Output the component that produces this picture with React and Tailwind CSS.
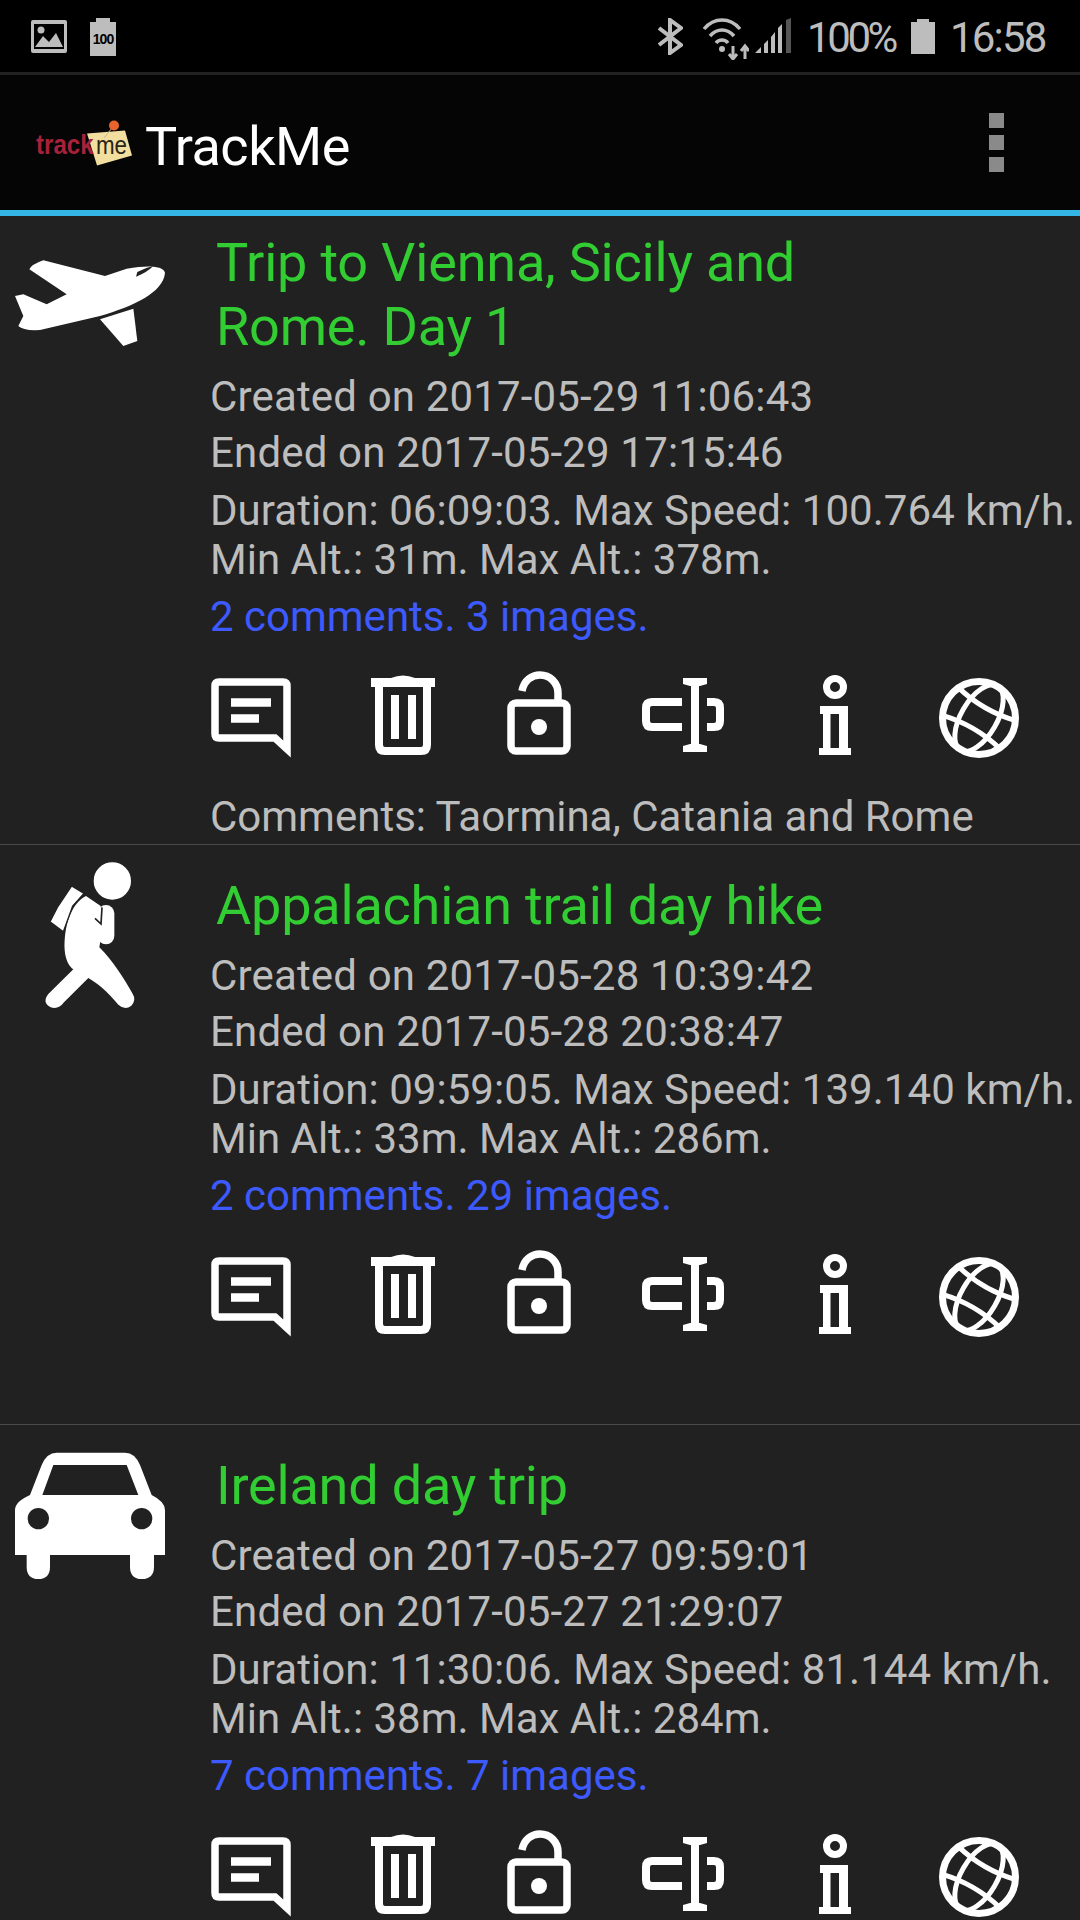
import React from 'react';

const trips = [
  {
    title: ['Trip to Vienna, Sicily and', 'Rome. Day 1'],
    created: '2017-05-29 11:06:43',
    ended: '2017-05-29 17:15:46',
    stats: 'Duration: 06:09:03. Max Speed: 100.764 km/h.',
    alt: 'Min Alt.: 31m. Max Alt.: 378m.',
    counts: '2 comments. 3 images.',
    note: 'Comments: Taormina, Catania and Rome',
    kind: 'plane',
  },
  {
    title: ['Appalachian trail day hike'],
    created: '2017-05-28 10:39:42',
    ended: '2017-05-28 20:38:47',
    stats: 'Duration: 09:59:05. Max Speed: 139.140 km/h.',
    alt: 'Min Alt.: 33m. Max Alt.: 286m.',
    counts: '2 comments. 29 images.',
    note: '',
    kind: 'hiker',
  },
  {
    title: ['Ireland day trip'],
    created: '2017-05-27 09:59:01',
    ended: '2017-05-27 21:29:07',
    stats: 'Duration: 11:30:06. Max Speed: 81.144 km/h.',
    alt: 'Min Alt.: 38m. Max Alt.: 284m.',
    counts: '7 comments. 7 images.',
    note: '',
    kind: 'car',
  },
];

function PlaneIcon() {
  return (
    <svg viewBox="0 0 570 510" className="w-[190px] h-[170px] block" fill="#fff">
      <path d="M495 170C490 150 450 146 380 158L315 180L130 133Q95 145 88 160L200 235L140 265L70 235L45 240L70 300L55 330Q70 345 120 342L300 300C400 270 490 230 495 170Z" />
      <path d="M300 310L400 278L412 375L370 390Z" />
      <path d="M408 182L412 168Q435 155 460 150Q440 170 408 182Z" fill="#212121" />
    </svg>
  );
}

function HikerIcon() {
  return (
    <svg viewBox="0 0 570 510" className="w-[190px] h-[170px] block" fill="#fff">
      <path d="M258 138C213 160 191 230 194 300C196 330 208 350 220 358L145 432Q125 458 152 472Q175 480 192 457L265 384C290 398 320 422 355 464Q375 482 394 467Q410 450 397 430C372 385 337 330 298 292C304 262 307 220 302 168Z" />
      <path d="M215 108L252 130L218 168L190 245L150 215L172 172Z" stroke="#212121" strokeWidth="4" />
      <path d="M318 190V258" stroke="#fff" strokeWidth="50" strokeLinecap="round" />
      <path d="M285 205L303 222L306 172" stroke="#212121" strokeWidth="5" fill="none" />
      <circle cx="337" cy="93" r="58" stroke="#212121" strokeWidth="4" />
    </svg>
  );
}

function CarIcon() {
  return (
    <svg viewBox="0 0 570 510" className="w-[190px] h-[170px] block" fill="#fff">
      <path
        fillRule="evenodd"
        d="M45 375V240Q45 215 90 195L125 105Q140 68 170 68H375Q405 68 420 105L455 195Q495 215 495 240V375H462V410Q462 447 425 447Q390 447 390 410V375H150V410Q150 447 115 447Q80 447 80 410V375ZM160 105L127 195H415L380 105ZM115 234A32 32 0 1 0 115 298A32 32 0 1 0 115 234ZM425 234A32 32 0 1 0 425 298A32 32 0 1 0 425 234Z"
      />
    </svg>
  );
}

const tripIcons = { plane: PlaneIcon, hiker: HikerIcon, car: CarIcon };

function ActionIcons() {
  return (
    <div className="flex items-start h-[90px] mt-[26px] ml-[1px]">
      <svg viewBox="0 0 80 80" className="w-[80px] h-[80px] mt-[7px] shrink-0" fill="none" stroke="#fff" strokeWidth="7.5">
        <path d="M8 4H72Q76 4 76 8V71L64 60H8Q4 60 4 56V8Q4 4 8 4Z" />
        <path d="M20 24.5H60M20 40.5H48" strokeWidth="8.5" />
      </svg>
      <svg viewBox="0 0 64 80" className="w-[64px] h-[80px] ml-[80px] mt-[4px] shrink-0" fill="#fff">
        <path d="M0 3H20Q32 -2 44 3H64V12H0Z" />
        <path d="M8 10V70Q8 76 14 76H50Q56 76 56 70V10" fill="none" stroke="#fff" strokeWidth="8" />
        <rect x="20" y="20" width="8" height="44" />
        <rect x="37" y="20" width="8" height="44" />
      </svg>
      <svg viewBox="0 0 64 84" className="w-[64px] h-[84px] ml-[72px] shrink-0" fill="none" stroke="#fff" strokeWidth="7.5">
        <rect x="4" y="32" width="56" height="48" rx="5" />
        <path d="M15 20C17 9 25 4 33 4C43 4 51 12 51 22V30" />
        <circle cx="32" cy="56" r="8" fill="#fff" stroke="none" />
      </svg>
      <svg viewBox="0 0 82 74" className="w-[82px] h-[74px] ml-[71px] mt-[7px] shrink-0" fill="none" stroke="#fff" strokeWidth="8">
        <path d="M40 24H10Q4 24 4 30V43Q4 49 10 49H40" />
        <path d="M65 24H72Q78 24 78 30V43Q78 49 72 49H65" />
        <path d="M53 4V70" strokeWidth="8" />
        <path d="M41 0H65V6L58 8H48L41 6ZM41 74H65V68L58 66H48L41 68Z" fill="#fff" stroke="none" />
      </svg>
      <svg viewBox="0 0 32 80" className="w-[32px] h-[80px] ml-[95px] mt-[4px] shrink-0" fill="#fff">
        <circle cx="16" cy="12" r="8.5" fill="none" stroke="#fff" strokeWidth="7" />
        <path fillRule="evenodd" d="M1 31H29V73H32V80H0V73H4V39H1ZM11.5 39V73H20V39Z" />
      </svg>
      <svg viewBox="0 0 80 80" className="w-[80px] h-[80px] ml-[88px] mt-[7px] shrink-0" fill="none" stroke="#fff">
        <circle cx="40" cy="40" r="36.5" strokeWidth="7" />
        <g transform="rotate(30 40 40)" strokeWidth="5">
          <ellipse cx="40" cy="40" rx="18" ry="37" />
          <path d="M7 24Q40 32 73 24M7 56Q40 48 73 56" />
        </g>
      </svg>
    </div>
  );
}

function TripRow({ trip, first }) {
  const TripIcon = tripIcons[trip.kind];
  return (
    <div className={`flex border-b-[1px] border-[#4a4a4a] ${first ? 'h-[629px]' : 'h-[580px]'}`}>
      <div className={`w-[210px] shrink-0 ${first ? 'pt-0' : 'pt-[5px]'}`}>
        <TripIcon />
      </div>
      <div className="min-w-0 flex-1 text-[42px] text-[#bdbdbd] whitespace-nowrap">
        <div className={`ml-[6px] text-[54px] leading-[64px] tracking-[-0.2px] text-[#32cd32] ${first ? 'pt-[15px]' : 'pt-[29px]'}`}>
          {trip.title.map((line) => (
            <div key={line}>{line}</div>
          ))}
        </div>
        <div className="mt-[10px] leading-[56px] tracking-[0.16px]">Created on {trip.created}</div>
        <div className="leading-[56px] tracking-[0.16px]">Ended on {trip.ended}</div>
        <div className="mt-[5px] leading-[49px] tracking-[0.05px]">{trip.stats}</div>
        <div className="leading-[49px]">{trip.alt}</div>
        <div className="mt-[5px] leading-[56px] text-[#3d5afe]">{trip.counts}</div>
        <ActionIcons />
        <div className="mt-[31px] leading-[50px]">{trip.note}</div>
      </div>
    </div>
  );
}

function StatusBar() {
  return (
    <div className="h-[72px] flex items-start bg-black text-[#bdbdbd] relative">
      <svg viewBox="0 0 36 33" className="w-[36px] h-[33px] ml-[31px] mt-[20px] shrink-0" fill="#bdbdbd">
        <path fillRule="evenodd" d="M2 0H34Q36 0 36 2V31Q36 33 34 33H2Q0 33 0 31V2Q0 0 2 0ZM3 4V29H33V4ZM4 27L12 16L18 22L25 13L32 27Z" />
        <circle cx="10" cy="10" r="3.5" />
      </svg>
      <div className="ml-[23px] mt-[18px] w-[26px] h-[38px] shrink-0 flex flex-col items-center">
        <div className="w-[14px] h-[4px] bg-[#bdbdbd]" />
        <div className="w-[26px] h-[34px] bg-[#bdbdbd] text-black text-[14px] font-bold leading-[34px] text-center tracking-[-1px] font-['Liberation_Sans',sans-serif]">100</div>
      </div>
      <svg viewBox="0 0 25 37" className="w-[25px] h-[37px] ml-[542px] mt-[18px] shrink-0" fill="none" stroke="#bdbdbd" strokeWidth="4">
        <path d="M1 10L23 27L12 35V2L23 10L1 27" />
      </svg>
      <svg viewBox="0 0 47 42" className="w-[47px] h-[42px] ml-[19px] mt-[18px] shrink-0" fill="none" stroke="#bdbdbd" strokeWidth="3.5">
        <path d="M2 11C12 -1 28 -1 38 11M8 18C15 10 25 10 32 18M14 25C17 21 23 21 26 25" />
        <circle cx="20" cy="31" r="3" fill="#bdbdbd" stroke="none" />
        <path d="M31 28V41M27 36L31 41L35 36M43 41V28M39 33L43 28L47 33" strokeWidth="3" />
      </svg>
      <svg viewBox="0 0 37 35" className="w-[37px] h-[35px] ml-[6px] mt-[18px] shrink-0" fill="#bdbdbd">
        <path d="M0 35L6 29V35ZM9 26L13 22V35H9ZM16 19L20 14V35H16ZM23 10L27 6V35H23Z" />
        <path d="M31 2L36 0V35H31Z" fill="#555" />
      </svg>
      <div className="ml-[15px] mt-[14px] w-[92px] text-[42px] leading-[48px] tracking-[-3.4px] font-normal shrink-0">100%</div>
      <div className="ml-[12px] mt-[19px] w-[24px] h-[35px] shrink-0 flex flex-col items-center">
        <div className="w-[12px] h-[3px] bg-[#bdbdbd]" />
        <div className="w-[24px] h-[32px] bg-[#bdbdbd]" />
      </div>
      <div className="ml-[15px] mt-[14px] text-[42px] leading-[48px] tracking-[-1.8px] font-normal shrink-0">16:58</div>
    </div>
  );
}

function Logo() {
  return (
    <svg viewBox="0 0 110 50" className="w-[110px] h-[50px] ml-[30px] shrink-0">
      <path d="M57 15.5L95 12.5L102 37.5L67 47.5Z" fill="#f2dfa0" />
      <path d="M84 7.5L74 20" stroke="#c9b98a" strokeWidth="1" />
      <circle cx="84" cy="7.5" r="5" fill="#e8642c" />
      <text transform="translate(6 35.5) scale(0.86 1)" fontFamily="Liberation Sans" fontSize="28" fontWeight="700" fill="#a8213a">track</text>
      <text transform="translate(66 35.5) scale(0.86 1)" fontFamily="Liberation Sans" fontSize="26" fill="#2a2416">me</text>
    </svg>
  );
}

function AppBar() {
  return (
    <div className="h-[135px] border-t-[3px] border-[#222] box-content bg-[#050505] flex items-center">
      <Logo />
      <div className="ml-[5px] mt-[8px] text-[54px] text-white tracking-[-0.5px] leading-none">TrackMe</div>
      <div className="ml-auto mr-[76px] flex flex-col gap-[7px]">
        <div className="w-[15px] h-[15px] bg-[#8a8a8a]" />
        <div className="w-[15px] h-[15px] bg-[#8a8a8a]" />
        <div className="w-[15px] h-[15px] bg-[#8a8a8a]" />
      </div>
    </div>
  );
}

export default function App() {
  return (
    <div className="w-[1080px] h-[1920px] overflow-hidden bg-[#212121] font-['Roboto',sans-serif]">
      <StatusBar />
      <AppBar />
      <div className="h-[6px] bg-[#33b5e5]" />
      {trips.map((trip, index) => (
        <TripRow key={trip.kind} trip={trip} first={index === 0} />
      ))}
    </div>
  );
}
